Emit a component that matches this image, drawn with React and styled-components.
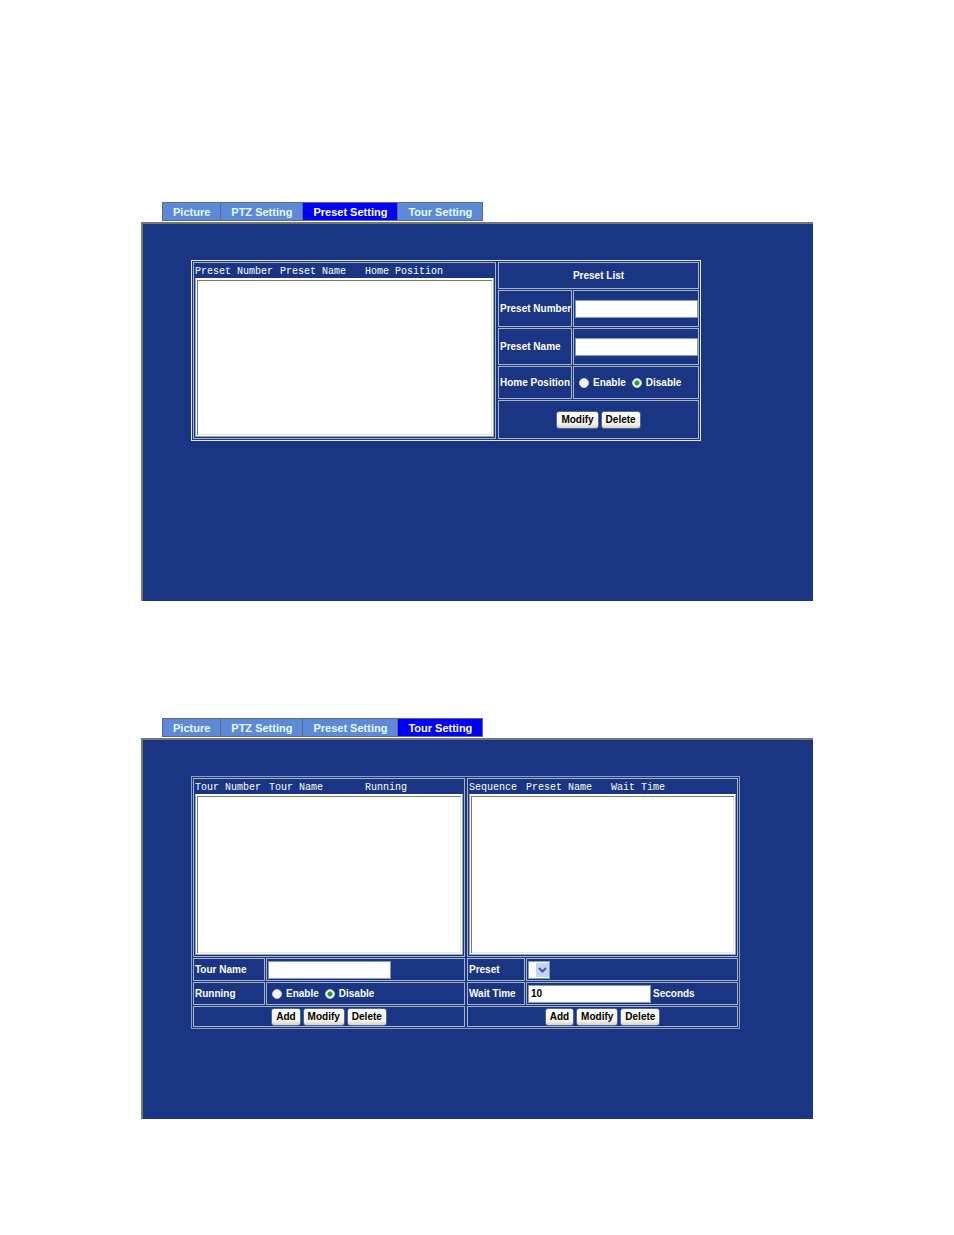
import React, { useState } from 'react';
import styled, { createGlobalStyle } from 'styled-components';

const GlobalStyle = createGlobalStyle`
    * {
        box-sizing: border-box;
    }

    body {
        margin: 0;
        background: #fff;
        color: #fff;
        font-family: 'Liberation Sans', sans-serif;
        font-size: 10px;
        font-weight: bold;
        line-height: 13px;
    }

    input, button, select {
        font: inherit;
        margin: 0;
    }
`;

const Page = styled.main`
    display: flex;
    flex-direction: column;
    gap: 117px;
    padding: 202px 141px 116px;
`;

const TabBar = styled.nav`
    display: flex;
    margin: 0 0 1px 21px;
`;

const Tab = styled.a`
    height: 19px;
    padding: 0 10px;
    border: 1px solid #5d6b80;
    border-right-width: ${({ $last }) => ($last ? '1px' : '0')};
    background: ${({ $active }) => ($active ? '#0000fe' : '#5c8ad8')};
    color: ${({ $active }) => ($active ? '#fff' : '#e6fbff')};
    font-size: 11px;
    line-height: 18px;
    text-decoration: none;
    white-space: nowrap;
`;

const Panel = styled.section`
    padding: 36px 48px ${({ $bottom }) => $bottom}px;
    border: solid #77776f;
    border-width: 2px 0 0 2px;
    background: #193584;
`;

const Frame = styled.form`
    display: grid;
    grid-template-columns: ${({ $columns }) => $columns};
    gap: 2px;
    max-width: ${({ $width }) => $width}px;
    padding: 1px;
    border: 1px solid ${({ $bright }) => ($bright ? '#e4e9f2' : '#8f9fb5')};
`;

const Column = styled.div`
    display: flex;
    flex-direction: column;
    gap: 1px;
    min-width: 0;
`;

const Cell = styled.div`
    display: flex;
    align-items: center;
    justify-content: ${({ $center }) => ($center ? 'center' : 'flex-start')};
    gap: 2px;
    min-width: 0;
    height: ${({ $height }) => $height}px;
    padding: 0 1px;
    border: 1px solid #a9b4c3;
    white-space: nowrap;
`;

const FieldRow = styled.div`
    display: grid;
    grid-template-columns: ${({ $label }) => $label}px 1fr;
    gap: 1px;
`;

const ListCell = styled.div`
    display: flex;
    flex-direction: column;
    flex: 1;
    padding: 1px;
    border: 1px solid #a9b4c3;
`;

const ListHead = styled.div`
    display: grid;
    grid-template-columns: ${({ $columns }) => $columns};
    height: 14px;
    font-family: 'Liberation Mono', monospace;
    font-weight: 400;
    line-height: 15px;
    white-space: nowrap;
`;

const ListBox = styled.select`
    flex: 1;
    width: 100%;
    min-height: ${({ $height }) => $height}px;
    border: 1px solid #8aa5c4;
    border-top-color: #fff;
    border-radius: 0;
    background: #fff;
    color: #000;
    box-shadow: inset 0 0 0 1px #fff, inset 2px 2px 0 #77777a, inset -2px -2px 0 #e6e3da;
    outline: none;
`;

const TextInput = styled.input`
    width: 123px;
    height: 18px;
    padding: 0 2px;
    border: 1px solid #7f9db9;
    border-radius: 0;
    background: #fff;
    color: #000;
`;

const RadioLabel = styled.label`
    display: flex;
    align-items: center;
    gap: 4px;
    margin-left: 4px;
`;

const Radio = styled.input`
    appearance: none;
    width: 10px;
    height: 10px;
    border: 1px solid #c3ccd4;
    border-radius: 50%;
    background: #f7f7f2;

    &:checked {
        background: radial-gradient(circle, #2b9a2b 0 2px, #f7f7f2 3px);
    }
`;

const Button = styled.button`
    height: 18px;
    padding: 0 4px;
    border: 1px solid #4a6c93;
    border-radius: 3px;
    background: linear-gradient(#fff, #f2f1ea 75%, #d6d1c3);
    color: #000;
    line-height: 16px;
`;

const SelectWrap = styled.span`
    position: relative;
    display: flex;
`;

const Select = styled.select`
    appearance: none;
    width: 22px;
    height: 18px;
    border: 1px solid #7f9db9;
    border-radius: 0;
    background: #fff;
    color: #000;
`;

const SelectArrow = styled.svg`
    position: absolute;
    top: 2px;
    right: 1px;
    pointer-events: none;
`;

const tabs = ['Picture', 'PTZ Setting', 'Preset Setting', 'Tour Setting'];

function Tabs({ active }) {
    return (
        <TabBar>
            {tabs.map((tab, idx) => (
                <Tab key={tab} href="#" $active={tab === active} $last={idx === tabs.length - 1}>
                    {tab}
                </Tab>
            ))}
        </TabBar>
    );
}

function List({ heads, columns, height }) {
    return (
        <ListCell>
            <ListHead $columns={columns}>
                {heads.map(head => (
                    <span key={head}>{head}</span>
                ))}
            </ListHead>
            <ListBox size={8} $height={height} aria-label={heads[0]} />
        </ListCell>
    );
}

function Field({ id, label, labelWidth, height, children }) {
    return (
        <FieldRow $label={labelWidth}>
            <Cell as={id ? 'label' : 'div'} htmlFor={id} $height={height}>
                {label}
            </Cell>
            <Cell $height={height}>{children}</Cell>
        </FieldRow>
    );
}

function EnableRadios({ name }) {
    const [value, setValue] = useState('Disable');

    return ['Enable', 'Disable'].map(option => (
        <RadioLabel key={option}>
            <Radio type="radio" name={name} checked={value === option} onChange={() => setValue(option)} />
            {option}
        </RadioLabel>
    ));
}

function Buttons({ names, height }) {
    return (
        <Cell $center $height={height}>
            {names.map(name => (
                <Button key={name} type="button">
                    {name}
                </Button>
            ))}
        </Cell>
    );
}

function PresetSetting() {
    return (
        <div>
            <Tabs active="Preset Setting" />
            <Panel $bottom={160}>
                <Frame $width={510} $columns="303fr 201fr" $bright>
                    <Column>
                        <List
                            heads={['Preset Number', 'Preset Name', 'Home Position']}
                            columns="85px 85px 1fr"
                            height={159}
                        />
                    </Column>
                    <Column>
                        <Cell $center $height={27}>
                            Preset List
                        </Cell>
                        <Field id="presetNumber" label="Preset Number" labelWidth={74} height={37}>
                            <TextInput id="presetNumber" type="text" />
                        </Field>
                        <Field id="presetName" label="Preset Name" labelWidth={74} height={37}>
                            <TextInput id="presetName" type="text" />
                        </Field>
                        <Field label="Home Position" labelWidth={74} height={33}>
                            <EnableRadios name="homePosition" />
                        </Field>
                        <Buttons names={['Modify', 'Delete']} height={39} />
                    </Column>
                </Frame>
            </Panel>
        </div>
    );
}

function TourSetting() {
    const [waitTime, setWaitTime] = useState('10');

    return (
        <div>
            <Tabs active="Tour Setting" />
            <Panel $bottom={90}>
                <Frame $width={549} $columns="272fr 271fr">
                    <Column>
                        <List heads={['Tour Number', 'Tour Name', 'Running']} columns="74px 96px 1fr" height={161} />
                        <Field id="tourName" label="Tour Name" labelWidth={72} height={23}>
                            <TextInput id="tourName" type="text" />
                        </Field>
                        <Field label="Running" labelWidth={72} height={23}>
                            <EnableRadios name="running" />
                        </Field>
                        <Buttons names={['Add', 'Modify', 'Delete']} height={21} />
                    </Column>
                    <Column>
                        <List heads={['Sequence', 'Preset Name', 'Wait Time']} columns="57px 85px 1fr" height={161} />
                        <Field id="preset" label="Preset" labelWidth={58} height={23}>
                            <SelectWrap>
                                <Select id="preset" />
                                <SelectArrow width="13" height="14" viewBox="0 0 13 14" aria-hidden="true">
                                    <rect width="13" height="14" rx="1" fill="#c1d2fb" />
                                    <path d="M3 5l3.5 3.5L10 5" fill="none" stroke="#435c8c" strokeWidth="2" />
                                </SelectArrow>
                            </SelectWrap>
                        </Field>
                        <Field id="waitTime" label="Wait Time" labelWidth={58} height={23}>
                            <TextInput
                                id="waitTime"
                                type="text"
                                value={waitTime}
                                onChange={e => setWaitTime(e.target.value)}
                            />
                            <span>Seconds</span>
                        </Field>
                        <Buttons names={['Add', 'Modify', 'Delete']} height={21} />
                    </Column>
                </Frame>
            </Panel>
        </div>
    );
}

function App() {
    return (
        <>
            <GlobalStyle />
            <Page>
                <PresetSetting />
                <TourSetting />
            </Page>
        </>
    );
}

export default App;
